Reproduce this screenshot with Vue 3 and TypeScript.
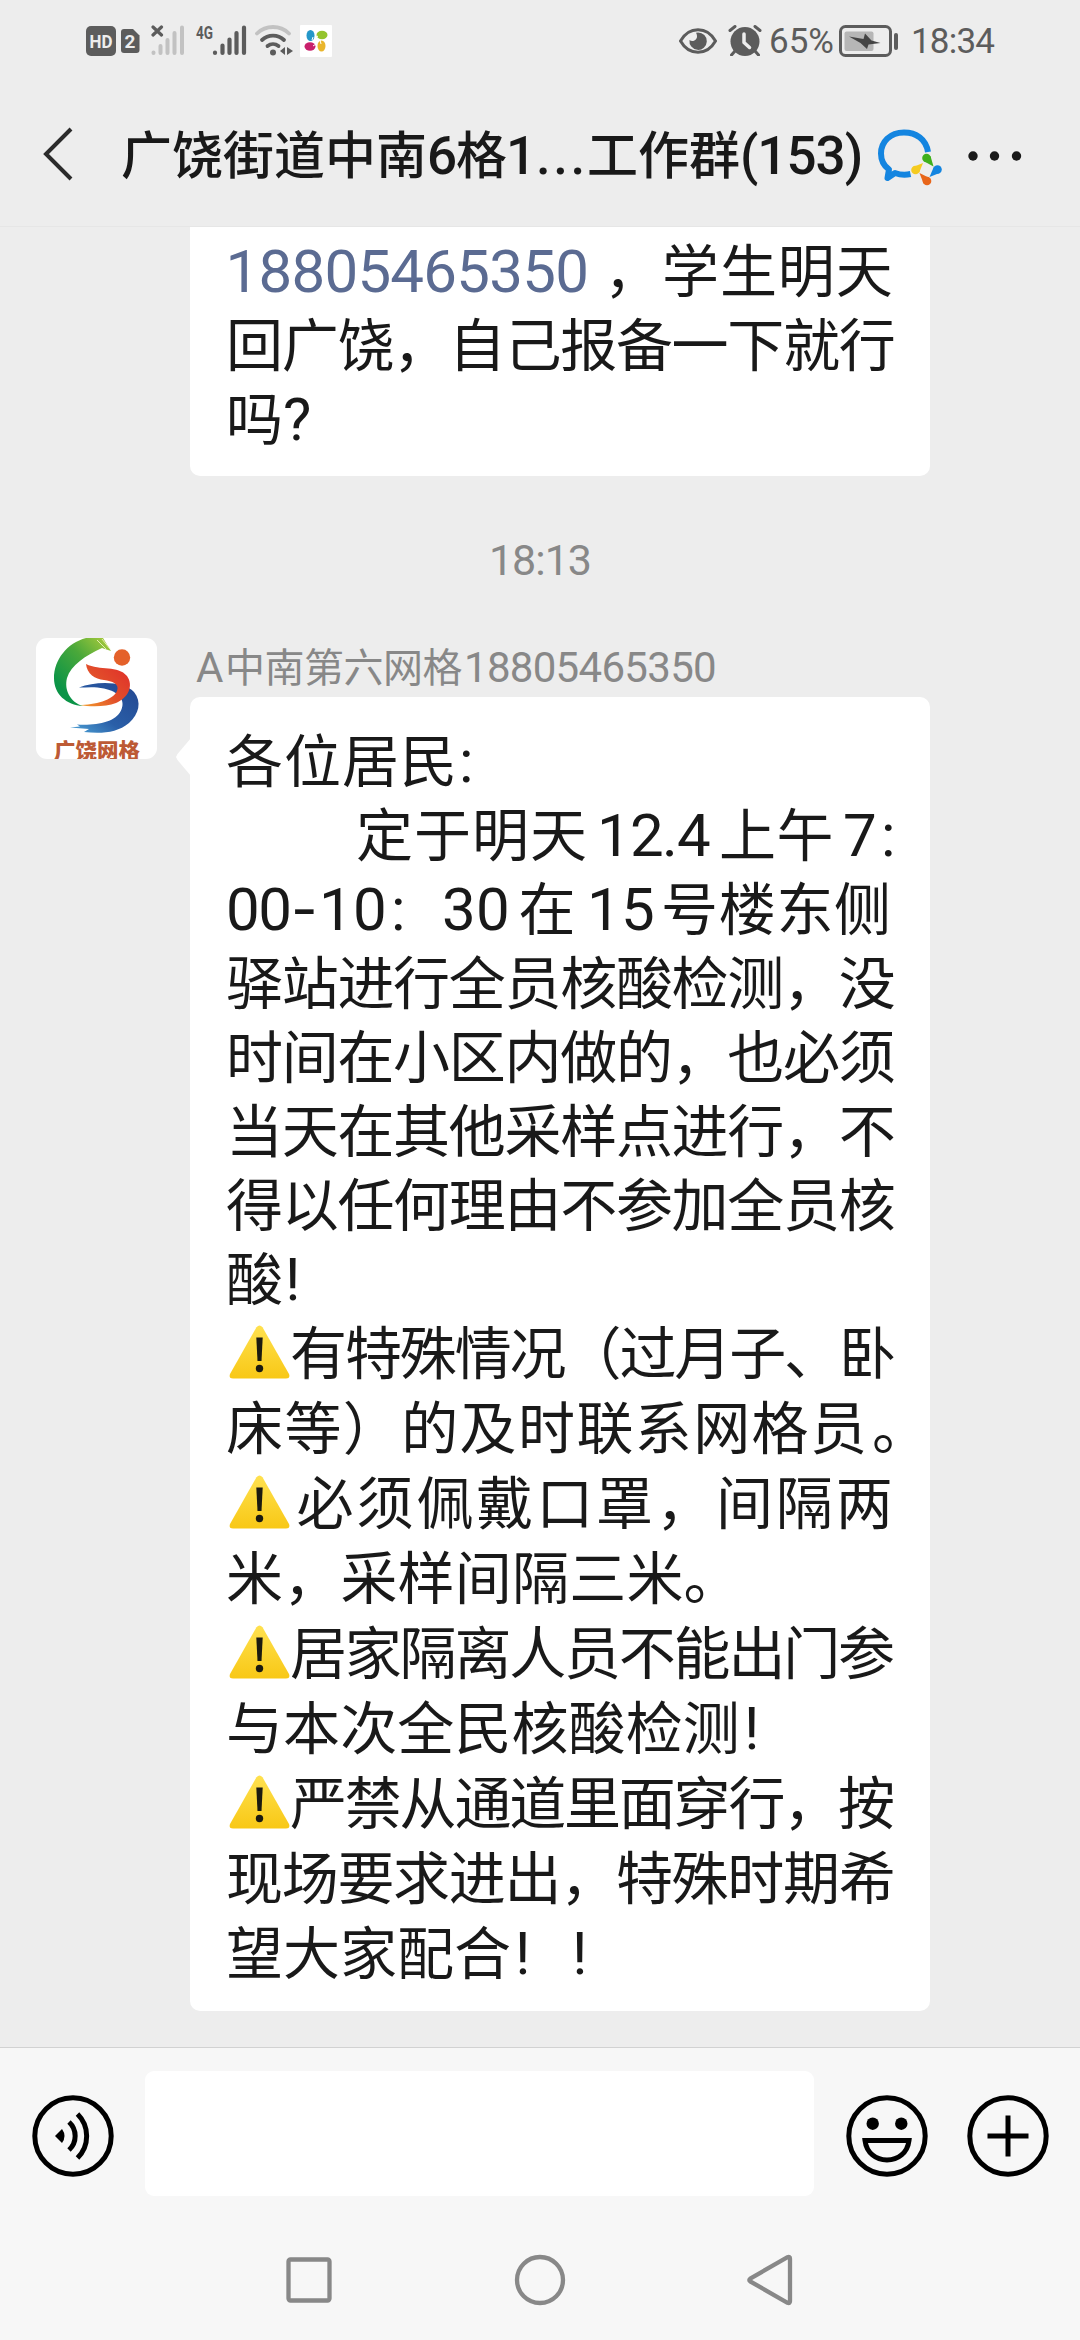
<script setup lang="ts">
type Kind = 'han' | 'num' | 'link' | 'dash' | 'warn'

interface Segment {
  x: number
  text: string
  kind: Kind
  pitch: number
}

interface Line {
  emoji?: boolean
  segments: Segment[]
}

const HAN_SIZE = 57
const DIGIT_ADVANCE = 33.7
const LINE_WIDTH = 670

const han = (x: number, text: string, pitch = 57): Segment => ({ x, text, kind: 'han', pitch })
const num = (x: number, text: string, pitch = 33): Segment => ({ x, text, kind: 'num', pitch })
const link = (x: number, text: string, pitch = 32.95): Segment => ({ x, text, kind: 'link', pitch })
const dash = (x: number): Segment => ({ x, text: '-', kind: 'dash', pitch: DIGIT_ADVANCE })
const warn = (): Segment => ({ x: 0, text: '', kind: 'warn', pitch: 57 })

const question: Line[] = [
  { segments: [link(-0.5, '18805465350'), han(378, '，'), han(436, '学生明天', 57.9)] },
  { segments: [han(0, '回广饶，自己报备一下就行', 55.7)] },
  { segments: [han(0, '吗'), num(57, '?')] },
]

const notice: Line[] = [
  { segments: [han(0, '各位居民', 58), num(233, ':')] },
  {
    segments: [
      han(130, '定于明天', 58),
      num(371, '12', 33), num(436, '.'), num(451, '4'),
      han(493, '上午', 57.5), num(617, '7'), num(655, ':'),
    ],
  },
  {
    segments: [
      num(0, '00', 32.3), dash(65), num(93, '1'), num(127, '0'), num(165, ':'),
      num(216, '30', 34), han(292.5, '在'), num(361, '15', 34),
      han(435, '号楼东侧', 57.7),
    ],
  },
  { segments: [han(0, '驿站进行全员核酸检测，没', 55.7)] },
  { segments: [han(0, '时间在小区内做的，也必须', 55.7)] },
  { segments: [han(0, '当天在其他采样点进行，不', 55.7)] },
  { segments: [han(0, '得以任何理由不参加全员核', 55.7)] },
  { segments: [han(0, '酸'), num(59, '!')] },
  { emoji: true, segments: [warn(), han(64, '有特殊情况（过月子、卧', 54.9)] },
  { emoji: true, segments: [han(0, '床等）的及时联系网格员', 58.4), han(646, '。')] },
  { emoji: true, segments: [warn(), han(70.6, '必须佩戴口罩，间隔两', 59.9)] },
  { emoji: true, segments: [han(0, '米，采样间隔三米。', 57.2)] },
  { emoji: true, segments: [warn(), han(64, '居家隔离人员不能出门参', 54.8)] },
  { emoji: true, segments: [han(0, '与本次全民核酸检测', 57.1), num(518, '!')] },
  { emoji: true, segments: [warn(), han(64, '严禁从通道里面穿行，按', 54.8)] },
  { emoji: true, segments: [han(0, '现场要求进出，特殊时期希', 55.7)] },
  { emoji: true, segments: [han(0, '望大家配合', 57), num(289, '!'), num(346, '!')] },
]

const messages = { question, notice }

function segmentStyle(line: Line, i: number) {
  const seg = line.segments[i]
  const next = line.segments[i + 1]
  const advance = seg.kind === 'han' ? HAN_SIZE : DIGIT_ADVANCE
  return {
    marginLeft: i === 0 ? `${seg.x}px` : '0px',
    width: `${(next ? next.x : LINE_WIDTH + 30) - seg.x}px`,
    letterSpacing: `${(seg.pitch - advance).toFixed(2)}px`,
  }
}
</script>

<template>
  <div class="screen">
    <header class="top">
      <div class="status">
        <div class="status-left">
          <svg class="hd" width="30" height="30" viewBox="0 0 30 30">
            <rect width="30" height="30" rx="5" fill="#5c5c5c" />
            <text x="15" y="22" text-anchor="middle" textLength="23" lengthAdjust="spacingAndGlyphs" font-size="18" font-weight="700" fill="#ededed">HD</text>
          </svg>
          <svg class="sim" width="19" height="24" viewBox="0 0 19 24">
            <path d="M3 0h9l6.500 6.500V21a3 3 0 0 1-3 3H3a3 3 0 0 1-3-3V3a3 3 0 0 1 3-3z" fill="#5c5c5c" />
            <text x="9" y="19" text-anchor="middle" font-size="19" font-weight="700" fill="#ededed">2</text>
          </svg>
          <svg class="sig1" width="34" height="32" viewBox="0 0 34 32">
            <path d="M2 3l8.500 8M10.500 3l-8.500 8" stroke="#5c5c5c" stroke-width="3.200" stroke-linecap="round" />
            <path d="M2.500 28.500v.5M9.500 22v7M16.500 16v13M23.500 9v20M31 3.500V29" stroke="#c2c2c2" stroke-width="4" stroke-linecap="round" />
          </svg>
          <svg class="sig2" width="51" height="32" viewBox="0 0 51 32">
            <text x="0" y="15" textLength="17" lengthAdjust="spacingAndGlyphs" font-size="18" font-weight="700" fill="#5c5c5c">4G</text>
            <path d="M19 28.500v.5M26.500 21.500V29M33.500 15.500V29M40.500 9v20M48 3.500V29" stroke="#5c5c5c" stroke-width="4.200" stroke-linecap="round" />
          </svg>
          <svg class="wifi" width="38" height="32" viewBox="0 0 38 32" fill="none" stroke-linecap="round" stroke-width="3.800">
            <path d="M2 9.500a23 23 0 0 1 32 0" stroke="#c2c2c2" />
            <path d="M7 16a16 16 0 0 1 22 0M12.500 22a9 9 0 0 1 11 0" stroke="#5c5c5c" />
            <circle cx="18" cy="28.500" r="3" fill="#5c5c5c" />
            <path d="M30 23v8l-5-4zM32 23v8l6-4z" fill="#5c5c5c" />
          </svg>
          <svg class="app" width="32" height="32" viewBox="0 0 32 32">
            <rect width="32" height="32" rx="1" fill="#fff" />
            <ellipse cx="10.500" cy="10.500" rx="4" ry="5.500" fill="#2497c9" />
            <ellipse cx="22" cy="10" rx="5.500" ry="4.200" fill="#94c42d" />
            <ellipse cx="10" cy="21.500" rx="5.500" ry="4.200" fill="#c8206c" />
            <ellipse cx="21.500" cy="21" rx="4" ry="5.500" fill="#e9b52c" />
            <path d="M12 15l1-3M15 13l3-2M16 19l-3 2M20 15l1 4" stroke="#fff" stroke-width="1" />
          </svg>
        </div>
        <div class="status-right">
          <svg class="eye" width="38" height="26" viewBox="0 0 38 26">
            <path d="M1.500 13C10-2 28-2 36.500 13 28 28 10 28 1.500 13z" fill="none" stroke="#5c5c5c" stroke-width="3" />
            <path d="M19 4.500a8.700 8.700 0 1 1-8.500 7.500c3 2.500 7.500 0 7.500-3.500 0-2-.5-3-1-3.800z" fill="#5c5c5c" />
          </svg>
          <svg class="alarm" width="34" height="31" viewBox="0 0 34 31">
            <circle cx="17" cy="16.500" r="14.500" fill="#5c5c5c" />
            <path d="M2 5.500L7 1.500M32 5.500L27 1.500M7 26l-3.500 4M27 26l3.500 4" stroke="#5c5c5c" stroke-width="3" stroke-linecap="round" />
            <path d="M16 9v8.500l5.500 5" fill="none" stroke="#ededed" stroke-width="3.500" stroke-linecap="round" stroke-linejoin="round" />
          </svg>
          <span class="pct">65%</span>
          <svg class="battery" width="60" height="32" viewBox="0 0 60 32">
            <rect x="1.500" y="1.500" width="50" height="29" rx="5" fill="none" stroke="#5c5c5c" stroke-width="3" />
            <rect x="5.500" y="6.500" width="29" height="19.500" rx="2" fill="#b6b6b6" />
            <path d="M10 11.500l14.500 2.500L26 8.500l6.500 7 9 2.500-12 1.500-1.500 4.500-6.500-6z" fill="#444" />
            <rect x="55" y="8" width="4" height="17" rx="2" fill="#5c5c5c" />
          </svg>
          <span class="clock">18:34</span>
        </div>
      </div>
      <nav class="nav">
        <svg class="back" width="30" height="54" viewBox="0 0 30 54">
          <path d="M28 2L3 27l25 25" fill="none" stroke="#2b2b2b" stroke-width="4" />
        </svg>
        <h1 class="title">
          <span class="t-a">广饶街道中南</span><span class="t-d t-6">6</span><span class="t-b">格</span><span class="t-d t-1">1</span><span class="t-d t-dots">...</span><span class="t-a t-c">工作群</span><span class="t-d t-n">(153)</span>
        </h1>
        <svg class="work" width="66" height="58" viewBox="0 0 66 58">
          <path d="M51 23C49 10 39 3.500 27 3.500 13 3.500 4 13 4 24.500c0 7 3 12.500 8 16L10.500 49l7.500-5c5.500 2 11 2 15.500 1" fill="none" stroke="#1485e0" stroke-width="6" stroke-linejoin="round" />
          <circle cx="49.500" cy="29" r="4.300" fill="#3fb01c" /><path d="M46.500 32l10 5.500L53.500 27z" fill="#3fb01c" />
          <circle cx="60.500" cy="40.500" r="4.300" fill="#1485e0" /><path d="M57 37.500L52.500 48l10-4z" fill="#1485e0" />
          <circle cx="38.500" cy="41" r="4.300" fill="#f5cb20" /><path d="M42 44l4-10-10 4z" fill="#f5cb20" />
          <circle cx="50" cy="52" r="4.300" fill="#e8661a" /><path d="M53.500 49.500L42.500 44l4 10.500z" fill="#e8661a" />
        </svg>
        <svg class="more" width="54" height="10" viewBox="0 0 54 10" fill="#191919">
          <circle cx="5" cy="5" r="4.700" /><circle cx="26.500" cy="5" r="4.700" /><circle cx="48.500" cy="5" r="4.700" />
        </svg>
      </nav>
    </header>

    <main class="chat">
      <section class="bubble first">
        <p v-for="(line, li) in messages.question" :key="li" class="line">
          <span
            v-for="(seg, si) in line.segments"
            :key="si"
            class="seg"
            :class="seg.kind"
            :style="segmentStyle(line, si)"
          >{{ seg.text }}</span>
        </p>
      </section>

      <time class="stamp">18:13</time>

      <article class="message">
        <svg class="avatar" width="121" height="121" viewBox="0 0 121 121">
          <defs>
            <linearGradient id="leaf" x1="0.900" y1="0" x2="0.200" y2="0.800">
              <stop offset="0" stop-color="#a5c93c" /><stop offset="0.450" stop-color="#4aa83a" /><stop offset="1" stop-color="#0b9447" />
            </linearGradient>
            <linearGradient id="flame" x1="1" y1="0.200" x2="0" y2="1">
              <stop offset="0" stop-color="#e0322a" /><stop offset="0.500" stop-color="#e2512a" /><stop offset="1" stop-color="#f4a02c" />
            </linearGradient>
            <linearGradient id="wave" x1="1" y1="0" x2="0" y2="1">
              <stop offset="0" stop-color="#23468f" /><stop offset="0.600" stop-color="#2a5fa8" /><stop offset="1" stop-color="#4fa5d8" />
            </linearGradient>
          </defs>
          <rect width="121" height="121" fill="#fff" />
          <path d="M43 49.500C60 43 88 43 98 54c8 10 5 22-5 31-12 10-28 11-45 9l5-3-19-1.500 10-1-3-2c20 1 38-2 44-14 5-10-2-19-17-22-9-2-17-1-25-1z" fill="url(#wave)" />
          <path d="M50 26c14 7 32 1 41 12 7 10 1 22-11 27-10 4-25 4-37 2 16 0 34-5 38-14 3-7-5-10-13-11-9-1-17-6-18-16z" fill="url(#flame)" />
          <path d="M50 0C31 5 18 22 18 40c0 16 12 27 29 28C34 64 28 52 31 40 35 27 49 18 66 10l9 3-8-13z" fill="url(#leaf)" />
          <path d="M61 2l9 9M66 1l8 10" stroke="#e4efb0" stroke-width="1" />
          <circle cx="86" cy="19.500" r="8.200" fill="#e4612a" />
          <text x="18" y="120" textLength="86" lengthAdjust="spacingAndGlyphs" font-size="21" font-weight="900" fill="#bd5a35">广饶网格</text>
        </svg>
        <div class="body">
          <div class="sender"><span class="s-a">A</span><span class="s-h">中南第六网格</span><span class="s-n">18805465350</span></div>
          <section class="bubble second">
            <p
              v-for="(line, li) in messages.notice"
              :key="li"
              class="line"
              :class="{ tall: line.emoji }"
            >
              <span
                v-for="(seg, si) in line.segments"
                :key="si"
                class="seg"
                :class="seg.kind"
                :style="segmentStyle(line, si)"
              ><svg v-if="seg.kind === 'warn'" width="61" height="54" viewBox="0 0 61 54">
                <defs>
                  <linearGradient id="sign" x1="0" y1="0" x2="0" y2="1">
                    <stop offset="0" stop-color="#ffe14f" /><stop offset="1" stop-color="#f8c816" />
                  </linearGradient>
                </defs>
                <path d="M27.500 2.200q3-3.600 6 0L60 49q1.500 4.500-3 4.500H4Q-.5 53.500 1 49z" fill="url(#sign)" />
                <path d="M27.300 12.500h6.400l-1.200 23.500h-4z" fill="#1c1a10" />
                <circle cx="30.500" cy="43.500" r="3.700" fill="#1c1a10" />
              </svg><template v-else>{{ seg.text }}</template></span>
            </p>
          </section>
        </div>
      </article>
    </main>

    <footer class="bottom">
      <div class="composer">
        <svg width="82" height="82" viewBox="0 0 82 82" fill="none" stroke="#000" stroke-width="5">
          <circle cx="41" cy="41" r="38.200" />
          <path d="M41.500 27a19 19 0 0 1 0 28M50 19a31 31 0 0 1 0 44" transform="translate(-4.500 0)" />
          <path d="M23 41l7-7q5 7 0 14z" fill="#000" stroke="none" />
        </svg>
        <div class="input"></div>
        <svg class="smile" width="82" height="82" viewBox="0 0 82 82" fill="none" stroke="#000" stroke-width="5">
          <circle cx="41" cy="41" r="38.200" />
          <circle cx="26.700" cy="28.700" r="6.200" fill="#000" stroke="none" />
          <circle cx="55.300" cy="28.700" r="6.200" fill="#000" stroke="none" />
          <path d="M19 45.500h44c-1.500 12.500-11 19.500-22 19.500s-20.500-7-22-19.500z" />
        </svg>
        <svg class="plus" width="82" height="82" viewBox="0 0 82 82" fill="none" stroke="#000" stroke-width="5">
          <circle cx="41" cy="41" r="38.200" />
          <path d="M41 20.500v41M20.500 41h41" />
        </svg>
      </div>
      <div class="sysnav">
        <svg width="52" height="52" viewBox="0 0 52 52"><rect x="5.500" y="5.500" width="41" height="41" rx="2" /></svg>
        <svg width="52" height="52" viewBox="0 0 52 52"><circle cx="26" cy="26" r="23" /></svg>
        <svg width="52" height="52" viewBox="0 0 52 52"><path d="M5.200 24.600L42.500 3.200q2.500-1 2.500 1.500v42.600q0 2.500-2.500 1.500L5.200 27.400q-1.800-1.400 0-2.800z" /></svg>
      </div>
    </footer>
  </div>
</template>

<style>
body {
  margin: 0;
  background: #ededed;
}
</style>

<style scoped>
.screen {
  width: 1080px;
  height: 2340px;
  display: flex;
  flex-direction: column;
  overflow: hidden;
  background: #ededed;
  color: #191919;
  font-family: Roboto, "Noto Sans CJK SC", sans-serif;
}
svg {
  display: block;
  flex: none;
}
.top {
  box-sizing: border-box;
  height: 227px;
  flex: none;
  border-bottom: 1px solid #e6e6e6;
}
.status {
  height: 82px;
  display: flex;
  justify-content: space-between;
  align-items: center;
  padding: 0 86px;
  color: #5c5c5c;
}
.status-left,
.status-right {
  display: flex;
  align-items: center;
}
.sim { margin-left: 5px; }
.sig1 { margin-left: 11px; margin-top: -2px; }
.sig2 { margin-left: 11px; margin-top: -2px; overflow: visible; }
.wifi { margin-left: 8px; margin-top: -2px; }
.app { margin-left: 7px; }
.status-right {
  font-size: 35px;
  line-height: 82px;
}
.alarm { margin-left: 11px; margin-top: -2px; }
.pct {
  width: 71px;
  margin-left: 7px;
  margin-top: 2px;
  white-space: nowrap;
}
.battery { margin-right: 1px; margin-left: -1px; }
.clock {
  width: 83px;
  margin-left: 11px;
  margin-top: 2px;
  letter-spacing: -0.8px;
  white-space: nowrap;
}
.nav {
  height: 144px;
  display: flex;
  align-items: center;
  padding-left: 43px;
}
.title {
  width: 744px;
  margin: -5px 0 0 48px;
  font-size: 51px;
  line-height: 80px;
  font-weight: 500;
  font-family: "Noto Sans CJK SC", sans-serif;
  white-space: nowrap;
}
.title span { display: inline-block; }
.t-a { width: 306px; }
.t-b { width: 50px; }
.title .t-d {
  font-family: Roboto, sans-serif;
  font-size: 53px;
  line-height: 60px;
}
.t-6 { width: 29px; }
.t-1 { width: 30px; }
.t-dots { width: 51px; letter-spacing: 2.500px; }
.t-c { width: 153px; }
.t-n { letter-spacing: -1px; }
.work { margin-left: 12px; margin-top: 8px; }
.more { margin-left: 25px; margin-top: 4px; }

.chat {
  flex: none;
  height: 1820px;
}
.bubble {
  position: relative;
  box-sizing: border-box;
  width: 740px;
  padding-left: 36px;
  background: #fff;
  border-radius: 10px;
}
.first {
  height: 249px;
  margin-left: 190px;
  padding-top: 3px;
  border-radius: 0 0 10px 10px;
}
.line {
  height: 74px;
  margin: 0;
  font: 400 57px/74px "Noto Sans CJK SC", sans-serif;
  white-space: nowrap;
  display: flex;
  align-items: baseline;
}
.line.tall {
  height: 75px;
  line-height: 75px;
}
.seg {
  flex: none;
  display: block;
}
.num,
.link {
  font-family: Roboto, sans-serif;
  font-size: 60px;
}
.dash {
  font-family: Inter, sans-serif;
  font-size: 58px;
}
.link { color: #5b6b92; }
.warn svg {
  display: inline-block;
  vertical-align: -5px;
  margin-left: 3px;
}
.stamp {
  display: block;
  height: 50px;
  margin-top: 59px;
  text-align: center;
  font-size: 43px;
  line-height: 50px;
  letter-spacing: -1px;
  color: #888;
}
.message {
  display: flex;
  margin-top: 53px;
  padding-left: 36px;
}
.avatar {
  border-radius: 11px;
}
.body { margin-left: 33px; }
.sender {
  height: 59px;
  padding-left: 6px;
  font: 400 40px/54px "Noto Sans CJK SC", sans-serif;
  color: #888;
  white-space: nowrap;
}
.sender span { display: inline-block; line-height: 50px; }
.s-a { width: 29px; font-family: Roboto, sans-serif; font-size: 42px; }
.s-h { width: 239px; letter-spacing: -0.5px; }
.s-n { font-family: Roboto, sans-serif; font-size: 42px; letter-spacing: -0.7px; }
.second {
  height: 1314px;
  padding-top: 23px;
}
.second::before {
  content: "";
  position: absolute;
  left: -14px;
  top: 41px;
  width: 15px;
  height: 38px;
  background: #fff;
  clip-path: polygon(100% 0, 10% 42%, 0 50%, 10% 58%, 100% 100%);
}
.bottom {
  box-sizing: border-box;
  height: 293px;
  flex: none;
  border-top: 1px solid #d2d2d2;
  background: #f7f7f7;
}
.composer {
  box-sizing: border-box;
  height: 174px;
  display: flex;
  align-items: center;
  padding: 0 0 3px 32px;
}
.input {
  width: 669px;
  height: 125px;
  margin: 0 0 0 31px;
  border-radius: 9px;
  background: #fff;
}
.composer svg { margin-top: 4px; }
.smile { margin-left: 32px; }
.plus { margin-left: 39px; }
.sysnav {
  display: flex;
  justify-content: center;
  gap: 179px;
  padding-top: 32px;
  fill: none;
  stroke: #888;
  stroke-width: 4.300px;
}
</style>
